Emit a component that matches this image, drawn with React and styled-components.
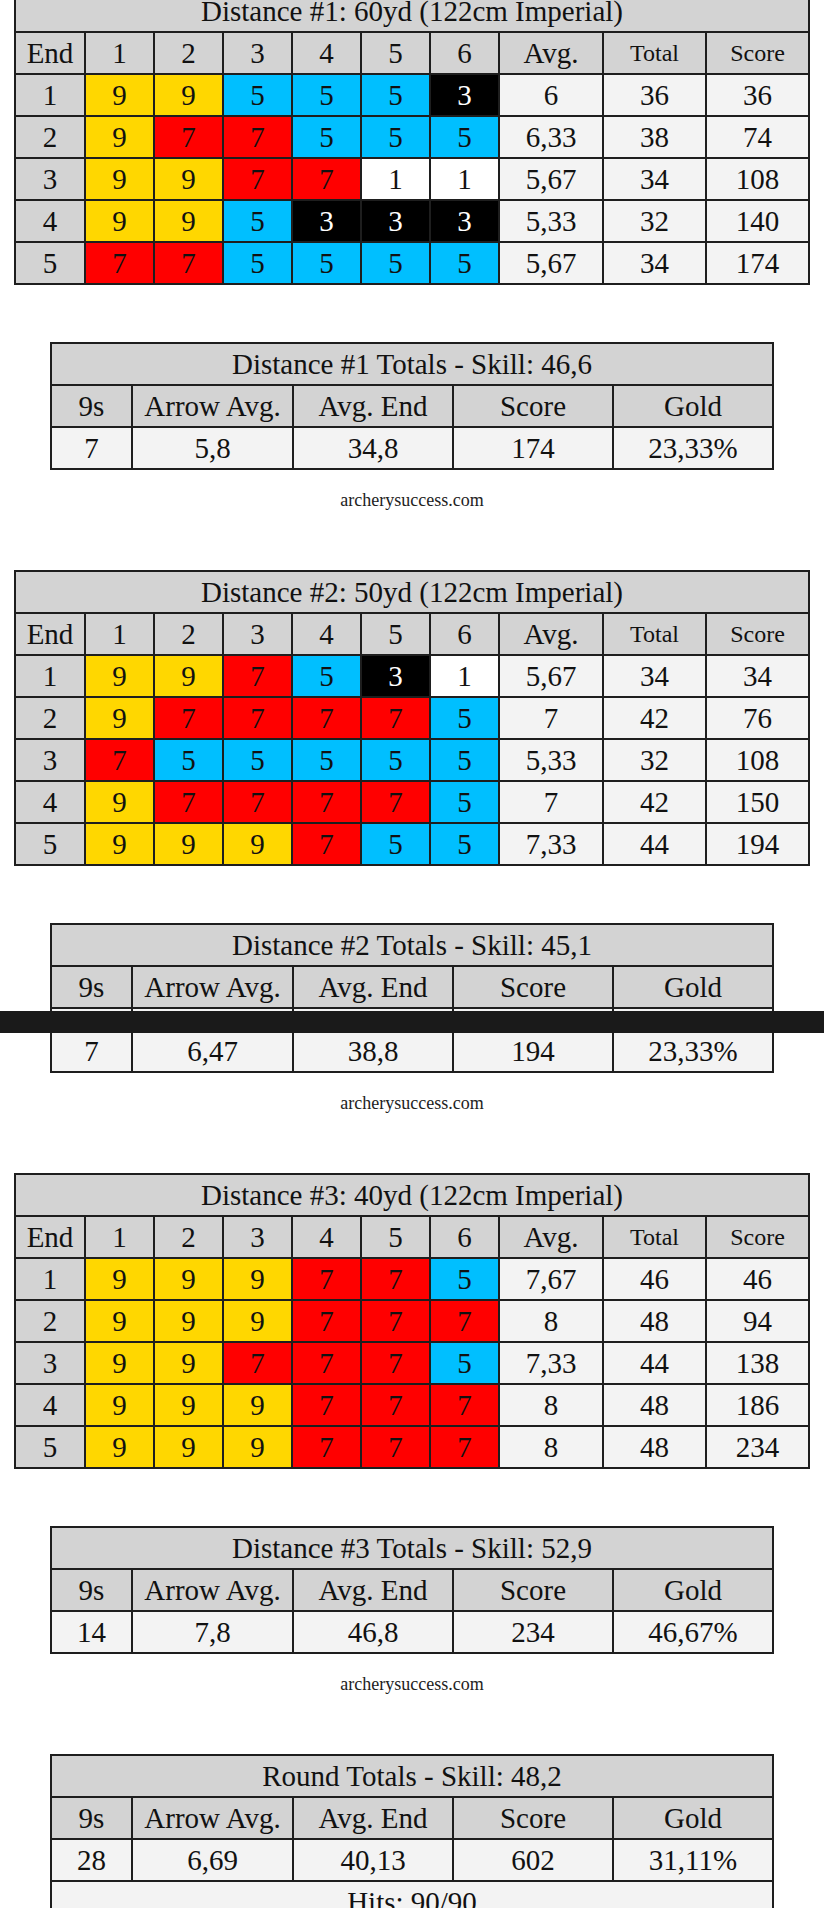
import React from "react";
import styled, { createGlobalStyle } from "styled-components";

const GlobalStyle = createGlobalStyle`
  html, body {
    margin: 0;
    padding: 0;
    background: #ffffff;
    overflow: hidden;
  }
  body {
    font-family: "Liberation Serif", "Times New Roman", serif;
    color: #111111;
  }
`;

const ringColors = {
  9: "#ffd700",
  7: "#ff0000",
  5: "#00bfff",
  3: "#000000",
  1: "#ffffff",
};

const toneColors = {
  head: "#d3d3d3",
  data: "#f3f3f3",
};

const distances = [
  {
    title: "Distance #1: 60yd (122cm Imperial)",
    ends: [
      [9, 9, 5, 5, 5, 3, "6", 36, 36],
      [9, 7, 7, 5, 5, 5, "6,33", 38, 74],
      [9, 9, 7, 7, 1, 1, "5,67", 34, 108],
      [9, 9, 5, 3, 3, 3, "5,33", 32, 140],
      [7, 7, 5, 5, 5, 5, "5,67", 34, 174],
    ],
    totals: {
      title: "Distance #1 Totals - Skill: 46,6",
      values: ["7", "5,8", "34,8", "174", "23,33%"],
    },
  },
  {
    title: "Distance #2: 50yd (122cm Imperial)",
    ends: [
      [9, 9, 7, 5, 3, 1, "5,67", 34, 34],
      [9, 7, 7, 7, 7, 5, "7", 42, 76],
      [7, 5, 5, 5, 5, 5, "5,33", 32, 108],
      [9, 7, 7, 7, 7, 5, "7", 42, 150],
      [9, 9, 9, 7, 5, 5, "7,33", 44, 194],
    ],
    totals: {
      title: "Distance #2 Totals - Skill: 45,1",
      values: ["7", "6,47", "38,8", "194", "23,33%"],
      scanned: true,
    },
  },
  {
    title: "Distance #3: 40yd (122cm Imperial)",
    ends: [
      [9, 9, 9, 7, 7, 5, "7,67", 46, 46],
      [9, 9, 9, 7, 7, 7, "8", 48, 94],
      [9, 9, 7, 7, 7, 5, "7,33", 44, 138],
      [9, 9, 9, 7, 7, 7, "8", 48, 186],
      [9, 9, 9, 7, 7, 7, "8", 48, 234],
    ],
    totals: {
      title: "Distance #3 Totals - Skill: 52,9",
      values: ["14", "7,8", "46,8", "234", "46,67%"],
    },
  },
];

const roundTotals = {
  title: "Round Totals - Skill: 48,2",
  values: ["28", "6,69", "40,13", "602", "31,11%"],
  hits: "Hits: 90/90",
};

const totalsHeaders = ["9s", "Arrow Avg.", "Avg. End", "Score", "Gold"];

function ScoreSheet({ title, ends }) {
  return (
    <EndsGrid>
      <Cell $span $tone="head">
        {title}
      </Cell>
      <Cell $tone="head">End</Cell>
      {[1, 2, 3, 4, 5, 6].map((n) => (
        <Cell key={n} $tone="head">
          {n}
        </Cell>
      ))}
      <Cell $tone="head">Avg.</Cell>
      <Cell $tone="head" $small>
        Total
      </Cell>
      <Cell $tone="head" $small>
        Score
      </Cell>
      {ends.map((end, i) => (
        <React.Fragment key={i}>
          <Cell $tone="head">{i + 1}</Cell>
          {end.slice(0, 6).map((arrow, j) => (
            <Cell key={j} $ring={arrow}>
              {arrow}
            </Cell>
          ))}
          <Cell $tone="data">{end[6]}</Cell>
          <Cell $tone="data">{end[7]}</Cell>
          <Cell $tone="data">{end[8]}</Cell>
        </React.Fragment>
      ))}
    </EndsGrid>
  );
}

function TotalsSheet({ title, values, scanned, hits, flush }) {
  return (
    <TotalsGrid $flush={flush}>
      <Cell $span $tone="head">
        {title}
      </Cell>
      {totalsHeaders.map((h) => (
        <Cell key={h} $tone="head">
          {h}
        </Cell>
      ))}
      {values.map((v, i) => (
        <Cell key={i} $tone="data" $tall={scanned}>
          {v}
        </Cell>
      ))}
      {hits && (
        <Cell $span $tone="data">
          {hits}
        </Cell>
      )}
      {scanned && <ScanBar />}
    </TotalsGrid>
  );
}

export default function App() {
  return (
    <>
      <GlobalStyle />
      <Page>
        {distances.map((d) => (
          <Distance key={d.title}>
            <ScoreSheet title={d.title} ends={d.ends} />
            <TotalsSheet {...d.totals} />
            <Credit>archerysuccess.com</Credit>
          </Distance>
        ))}
        <TotalsSheet {...roundTotals} flush />
      </Page>
    </>
  );
}

const Page = styled.main`
  width: 824px;
  height: 1919px;
  margin-top: -11px;
  display: flex;
  flex-direction: column;
  align-items: center;
  overflow: hidden;
`;

const Distance = styled.section`
  display: flex;
  flex-direction: column;
  align-items: center;
`;

const Sheet = styled.div`
  position: relative;
  display: grid;
  gap: 2px;
  padding: 2px;
  background: #1e1e1e;
`;

const EndsGrid = styled(Sheet)`
  grid-template-columns: 68px repeat(6, 67px) 102px 101px 101px;
`;

const TotalsGrid = styled(Sheet)`
  grid-template-columns: 79px 159px 158px 158px 158px;
  margin-top: ${({ $flush }) => ($flush ? "0" : "57px")};
`;

const Cell = styled.div`
  grid-column: ${({ $span }) => ($span ? "1 / -1" : "auto")};
  height: ${({ $tall }) => ($tall ? "62px" : "40px")};
  box-sizing: border-box;
  padding-top: ${({ $tall }) => ($tall ? "22px" : "0")};
  display: flex;
  align-items: center;
  justify-content: center;
  font-size: ${({ $small }) => ($small ? "24px" : "29px")};
  line-height: 1;
  white-space: nowrap;
  background: ${({ $ring, $tone }) =>
    $ring ? ringColors[$ring] : toneColors[$tone]};
  color: ${({ $ring }) => ($ring === 3 ? "#ffffff" : "#111111")};
`;

const ScanBar = styled.div`
  position: absolute;
  top: 88px;
  left: -50px;
  width: 830px;
  height: 22px;
  background: #1a1a1a;
`;

const Credit = styled.p`
  margin: 20px 0 60px;
  font-size: 18px;
  line-height: 20px;
  color: #222222;
`;
